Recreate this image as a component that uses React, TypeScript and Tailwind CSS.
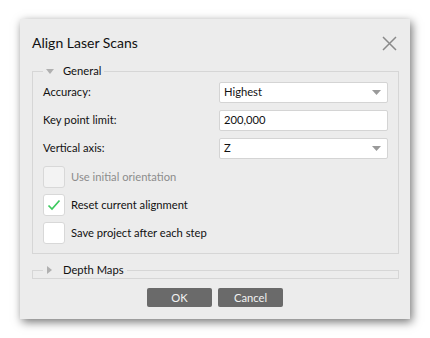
import React from 'react';

const font = { fontFamily: 'Lato, "Noto Sans", sans-serif' };

function Caret({ open }: { open: boolean }) {
    return open ? (
        <svg width="8" height="5" viewBox="0 0 8 5" className="mr-[9px]">
            <path d="M0 0 L8 0 L4 5 Z" fill="#b0b0b0" />
        </svg>
    ) : (
        <svg width="5" height="8" viewBox="0 0 5 8" className="mr-[11px] ml-[1px]">
            <path d="M0 0 L5 4 L0 8 Z" fill="#b0b0b0" />
        </svg>
    );
}

function Combo({ value, arrow = true }: { value: string; arrow?: boolean }) {
    return (
        <div className="h-[21px] flex items-center justify-between bg-white border border-[#d4d4d4] rounded-[2px] pl-[4px] pr-[6px] text-[#111]">
            <span>{value}</span>
            {arrow && (
                <svg width="9" height="5" viewBox="0 0 9 5">
                    <path d="M0 0 L9 0 L4.5 5 Z" fill="#9a9a9a" />
                </svg>
            )}
        </div>
    );
}

function Check({ label, checked = false, disabled = false }: { label: string; checked?: boolean; disabled?: boolean }) {
    return (
        <div className="flex items-center h-[22px]">
            <div className={`w-[22px] h-[22px] rounded-[3px] border border-[#d8d8d8] flex items-center justify-center ${disabled ? 'bg-[#f3f3f3]' : 'bg-white'}`}>
                {checked && (
                    <svg width="14" height="12" viewBox="0 0 14 12">
                        <path d="M1.5 6.5 L5 10 L12.5 1.5" stroke="#3cc95e" strokeWidth="1.7" fill="none" />
                    </svg>
                )}
            </div>
            <span className={`ml-[6px] ${disabled ? 'text-[#8c8c8c]' : 'text-[#111]'}`}>{label}</span>
        </div>
    );
}

export default function App() {
    return (
        <div className="w-[430px] h-[338px] bg-white pt-[19px] pl-[20px] text-[11.2px]" style={font}>
            <div className="w-[390px] h-[300px] bg-[#ececec] shadow-[2px_3px_9px_rgba(0,0,0,0.55)] flex flex-col">
                <div className="flex items-center justify-between pl-[12px] pr-[12px] pt-[4px] h-[44px]">
                    <span className="text-[14px] text-[#111] leading-none">Align Laser Scans</span>
                    <svg width="15" height="15" viewBox="0 0 15 15" className="mr-[1px]">
                        <path d="M1 1 L14 14 M14 1 L1 14" stroke="#8a8a8a" strokeWidth="1.5" />
                    </svg>
                </div>

                <fieldset className="mx-[12px] mr-[11px] border border-[#d6d6d6] pl-[10px] pr-[10px] pb-[9px] pt-[3px]">
                    <legend className="px-[3px] flex items-center h-[16px] text-[#111]">
                        <Caret open />
                        General
                    </legend>
                    <div className="grid grid-cols-[1fr_169px] gap-y-[7px] items-center">
                        <span className="text-[#111]">Accuracy:</span>
                        <Combo value="Highest" />
                        <span className="text-[#111]">Key point limit:</span>
                        <Combo value="200,000" arrow={false} />
                        <span className="text-[#111]">Vertical axis:</span>
                        <Combo value="Z" />
                    </div>
                    <div className="flex flex-col gap-[6px] mt-[7px]">
                        <Check label="Use initial orientation" disabled />
                        <Check label="Reset current alignment" checked />
                        <Check label="Save project after each step" />
                    </div>
                </fieldset>

                <fieldset className="mx-[12px] mr-[11px] mt-[8px] border border-[#d6d6d6] h-[15px]">
                    <legend className="ml-[10px] px-[3px] flex items-center h-[16px] text-[#111]">
                        <Caret open={false} />
                        Depth Maps
                    </legend>
                </fieldset>

                <div className="flex justify-center gap-[6px] mt-[11px]">
                    <button className="w-[65px] h-[19px] bg-[#6a6a6a] rounded-[2px] text-[#f2f2f2] leading-none">OK</button>
                    <button className="w-[65px] h-[19px] bg-[#6a6a6a] rounded-[2px] text-[#f2f2f2] leading-none">Cancel</button>
                </div>
            </div>
        </div>
    );
}
